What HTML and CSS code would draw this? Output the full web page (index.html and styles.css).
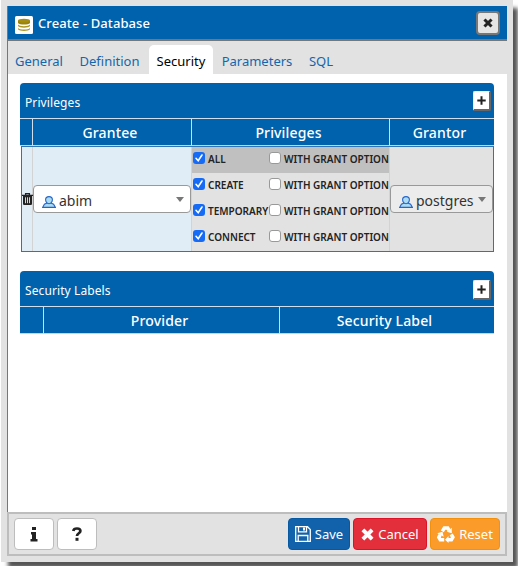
FILE: index.html
```html
<!DOCTYPE html>
<html lang="en">
<head>
<meta charset="utf-8">
<title>Create - Database</title>
<link rel="stylesheet" href="styles.css">
</head>
<body>
<svg class="defs" width="0" height="0" aria-hidden="true">
  <symbol id="user" viewBox="0 0 14 12"><path d="M.6 11.400L2.400 8.200 5 7C3.900 6 3.600 5 3.600 3.800 3.600 1.800 5 .6 7 .6s3.400 1.200 3.400 3.200C10.400 5 10.100 6 9 7l2.600 1.200 1.800 3.200z" fill="#acdcf3" stroke="#2766c8" stroke-width="1.100"/><path d="M4.700 7c1.500.9 3.100.9 4.600 0" fill="none" stroke="#2766c8"/></symbol>
  <symbol id="cross" viewBox="0 0 12 12"><path d="M3 3l6 6M9 3L3 9" fill="none" stroke="currentColor" stroke-width="3.600" stroke-linecap="square"/></symbol>
  <symbol id="plus" viewBox="0 0 9 9"><path d="M4.500.3v8.400M.3 4.500h8.400" fill="none" stroke="#222" stroke-width="2"/></symbol>
</svg>
<div class="dialog">
  <div class="inner">
    <header class="title">
      <svg class="db" viewBox="0 0 18 18"><rect width="18" height="18" rx="1.500" fill="#fff"/><path d="M3 4.500v2.600c1.500 2 10.500 2 12 0V4.500z" fill="#9a8208"/><ellipse cx="9" cy="4.600" rx="6" ry="1.900" fill="#a48c10"/><path d="M3 8.500c1.500 2.200 10.500 2.200 12 0v1.600c-1.500 2.100-10.500 2.100-12 0zM3 11.900c1.500 2.200 10.500 2.200 12 0v1.400c-1.500 2.100-10.500 2.100-12 0z" fill="#ad9722"/></svg>
      <span>Create - Database</span>
      <button class="close"><svg width="10" height="10"><use href="#cross"/></svg></button>
    </header>
    <nav class="tabs"><span class="t1">General</span><span class="t2">Definition</span><span class="t3 active">Security</span><span class="t4">Parameters</span><span class="t5">SQL</span></nav>
    <main>
      <section class="panel">
        <div class="bar"><span>Privileges</span><button class="add"><svg width="9" height="9"><use href="#plus"/></svg></button></div>
        <div class="heads privs"><b></b><b>Grantee</b><b>Privileges</b><b>Grantor</b></div>
        <div class="body">
          <div class="trash"><svg width="11" height="12" viewBox="0 0 11 12"><path d="M0 2.400h11M3.600 2V.7h3.800V2" fill="none" stroke="#222" stroke-width="1.300"/><path d="M1 3h9v8.200l-.8.800H1.800L1 11.200z" fill="#222"/><path d="M3.500 4.300v5.900M5.500 4.300v5.900M7.500 4.300v5.900" stroke="#e0edf7" stroke-width=".9"/></svg></div>
          <div class="grantee"><div class="select"><svg class="usr"><use href="#user"/></svg><span>abim</span><i></i></div></div>
          <div class="options">
            <div class="row all"><i class="ck"><svg viewBox="0 0 12 12"><path d="M3 6.300l2.200 2.500L9 3"/></svg></i><span>ALL</span><i class="un"></i><span>WITH GRANT OPTION</span></div>
            <div class="row"><i class="ck"><svg viewBox="0 0 12 12"><path d="M3 6.300l2.200 2.500L9 3"/></svg></i><span>CREATE</span><i class="un"></i><span>WITH GRANT OPTION</span></div>
            <div class="row"><i class="ck"><svg viewBox="0 0 12 12"><path d="M3 6.300l2.200 2.500L9 3"/></svg></i><span>TEMPORARY</span><i class="un"></i><span>WITH GRANT OPTION</span></div>
            <div class="row"><i class="ck"><svg viewBox="0 0 12 12"><path d="M3 6.300l2.200 2.500L9 3"/></svg></i><span>CONNECT</span><i class="un"></i><span>WITH GRANT OPTION</span></div>
          </div>
          <div class="grantor"><div class="select"><svg class="usr"><use href="#user"/></svg><span>postgres</span><i></i></div></div>
        </div>
      </section>
      <section class="panel labels">
        <div class="bar"><span>Security Labels</span><button class="add"><svg width="9" height="9"><use href="#plus"/></svg></button></div>
        <div class="heads secs"><b></b><b>Provider</b><b>Security Label</b></div>
      </section>
    </main>
    <footer>
      <button class="help"><svg width="8" height="15" viewBox="0 0 8 15"><path d="M2 0h4v3H2zM1 5h5v7h1.500v2.500H.5V12H2V7.500H1z" fill="#222"/></svg></button>
      <button class="help"><svg width="10" height="14" viewBox="0 0 10 14"><path d="M1.300 4C1.500 2.200 3 1.500 5 1.500c2.200 0 3.400 1 3.400 2.600C8.400 6.300 5 6.300 5 9" fill="none" stroke="#222" stroke-width="2.700"/><path d="M3.500 10.800h3v3h-3z" fill="#222"/></svg></button>
      <button class="act save"><svg width="16" height="16" viewBox="0 0 16 16" fill="none" stroke="#fff" stroke-width="1.300"><path d="M.7.700h11.800l2.800 2.800v11.800H.7zM3.500.7v5.100h8V.7M3.200 15.300V9.500h9.600v5.800"/><path d="M9 1.500v3" stroke-width="2"/></svg><span>Save</span></button>
      <button class="act cancel"><svg width="13" height="13"><use href="#cross"/></svg><span>Cancel</span></button>
      <button class="act reset"><svg width="18" height="17" viewBox="0 0 18 17"><g fill="none" stroke="#fff" stroke-width="3.500"><path d="M5.300 5.300L7.300 2h3.400l1.400 2.400M14.200 8.300l1.700 3-1.500 2.500h-3.500M7.200 13.800H3.300l-1.500-2.500 1.500-2.700"/></g><path d="M14.800 1.800v5.400l-5-1.500zM11.500 10v7L8 13.700zM.2 7.200l5.300-1.500 1.200 5z" fill="#fff"/></svg><span>Reset</span></button>
    </footer>
  </div>
</div>
</body>
</html>
```
FILE: styles.css
```css
* { box-sizing: border-box; }
html { background: #fff; overflow: hidden; }
body { margin: 0; width: 518px; height: 566px; padding-left: 1px; overflow: hidden; font-family: "Noto Sans", "Open Sans", sans-serif; font-size: 13px; color: #222; }
button { font: inherit; margin: 0; padding: 0; display: flex; align-items: center; justify-content: center; }
svg { display: block; flex: none; }
span { white-space: nowrap; }
.defs { position: absolute; }
.dialog { width: 512px; height: 562px; background: #e2e2e2; padding: 6px; box-shadow: 6px 7px 4px -1px #555; }
.inner { width: 500px; height: 550px; display: flex; flex-direction: column; }
.title { height: 35px; background: #0062ac; border-left: 1px solid #777; border-bottom: 2px solid #777; display: flex; align-items: center; color: #fff; padding: 0 7px; }
.title span { margin-left: 5px; font-weight: 500; letter-spacing: .1px; }
.db { width: 18px; height: 18px; margin-top: 4px; }
.close { width: 24px; height: 24px; margin-left: auto; border: 2px solid #777; border-radius: 4px; background: #e5e5e5; color: #222; }
.tabs { height: 33px; border-left: 1px solid #777; display: flex; align-items: flex-end; color: #1466ac; line-height: 25px; }
.tabs span { height: 29px; padding-top: 4px; text-align: center; }
.tabs .t1 { width: 62px; }
.tabs .t2 { width: 79px; }
.tabs .t3 { width: 64px; }
.tabs .t4 { width: 88px; }
.tabs .t5 { width: 40px; }
.tabs .active { background: #fff; color: #000; border-radius: 5px 5px 0 0; }
main { height: 438px; background: #fff; border-left: 1px solid #777; padding: 9px 13px 0 12px; }
.panel { width: 474px; }
.bar { height: 36px; background: #0062ac; border-radius: 4px 4px 0 0; border-bottom: 1px solid #d0dfeb; display: flex; align-items: center; justify-content: space-between; padding: 1px 3px 0 5px; color: #fff; font-size: 12px; }
.bar span { padding-top: 2px; letter-spacing: .1px; }
.add { width: 18px; height: 20px; background: #fff; border: 1px solid #eee; border-right: 2px solid #666; border-bottom: 2px solid #666; border-radius: 2px; }
.labels .add { margin-top: 1px; }
.heads { height: 27px; display: grid; background: #0062ac; border-bottom: 1px solid #d2d2d2; color: #fff; font-size: 14px; line-height: 27px; text-align: center; letter-spacing: .15px; }
.heads b { font-weight: 500; border-right: 1px solid #d0dfeb; padding-right: 4px; }
.heads b:last-child { border-right: 0; padding-right: 5px; }
.privs { grid-template-columns: 13px 159px 198px 104px; }
.secs { grid-template-columns: 24px 236px 214px; }
.body { height: 106px; border: 1px solid #2e75b2; margin-left: 1px; background: #e2e2e2; display: grid; grid-template-columns: 11px 159px 198px 103px; }
.trash, .grantee { background: #e0edf6; }
.trash, .grantee, .options { border-right: 1px solid #d3d3d3; }
.trash { display: flex; align-items: center; }
.grantee, .grantor { display: flex; align-items: center; }
.select { width: 158px; height: 28px; border: 1px solid #999; border-radius: 4px; background: #fff; display: flex; align-items: center; padding: 0 6px 0 8px; font-size: 14px; }
.grantor .select { width: 103px; background: #ececec; }
.usr { width: 14px; height: 12px; margin-top: 6px; }
.select span { margin-left: 3px; margin-top: 2px; color: #333; }
.select i { margin-left: auto; border: 4px solid transparent; border-top: 5px solid #777; border-bottom: 0; }
.row { height: 26px; display: grid; grid-template-columns: 15px 61px 15px 1fr; align-items: center; font-size: 10px; font-weight: 600; padding: 0 0 4px 1px; }
.row.all { background: #c0c0c0; }
.row span { padding-top: 1px; line-height: 14px; }
.ck, .un { width: 12px; height: 12px; border-radius: 3px; display: block; }
.ck { background: #156bf5; }
.ck path { fill: none; stroke: #fff; stroke-width: 1.600; stroke-linecap: round; }
.un { background: #fff; border: 1px solid #999; }
.labels { margin-top: 19px; }
footer { height: 44px; border: 2px solid #bdbdbd; display: flex; align-items: flex-start; padding: 4px 5px; }
footer button { height: 32px; border: 1px solid #bdbdbd; border-radius: 4px; }
.help { width: 40px; background: #fff; margin-right: 3px; }
.act { color: #fff; gap: 4px; }
.save { width: 62px; background: #1262ab; border-color: #0759a2; margin-left: auto; }
.cancel { width: 74px; background: #e32f3b; border-color: #dc1227; margin: 0 3px; }
.reset { width: 70px; background: #fa9b2a; border-color: #f4900b; }
```
